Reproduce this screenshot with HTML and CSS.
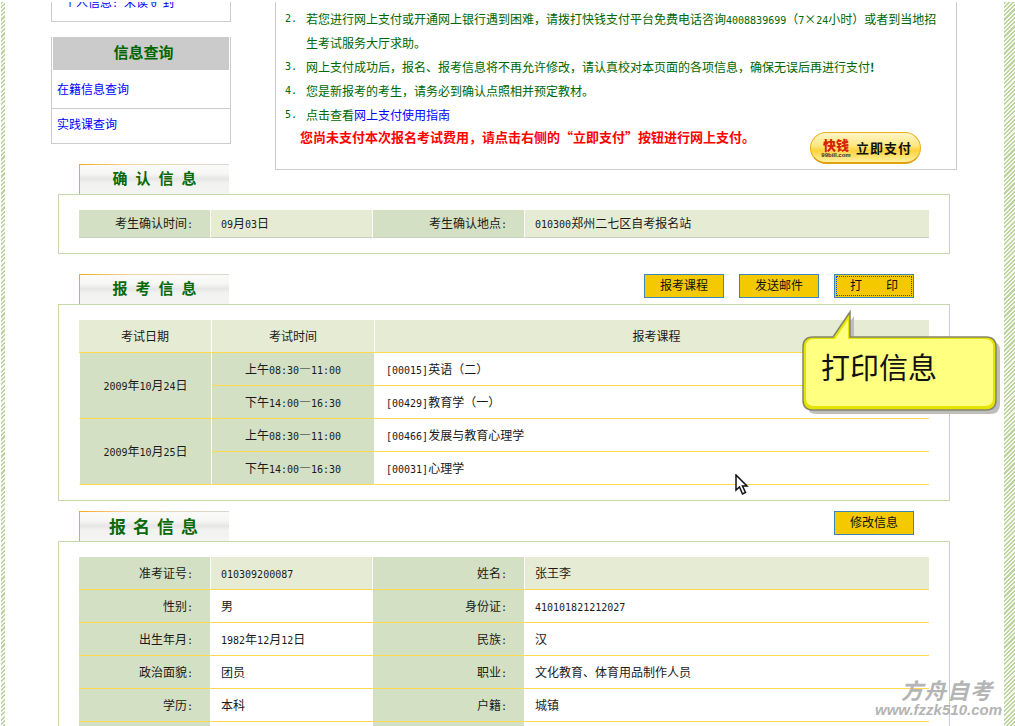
FILE: index.html
```html
<!DOCTYPE html>
<html lang="zh-CN">
<head>
<meta charset="utf-8">
<title>报考信息</title>
<link rel="stylesheet" href="styles.css">
</head>
<body>
<div class="page">
  <div class="stripe stripe-left"></div>
  <main class="main">
    <div class="top">
      <aside class="side">
        <div class="side-clip"><a class="clip-text" href="#">个人信息<span class="n">: </span>未读 <span class="n"> 0 </span> 封</a></div>
        <div class="side-box">
          <h3 class="side-head">信息查询</h3>
          <div class="side-row side-row-a"><a href="#">在籍信息查询</a></div>
          <div class="side-row side-row-b"><a href="#">实践课查询</a></div>
        </div>
      </aside>
      <section class="notice">
        <div class="note"><span class="note-no n">2.</span><p>若您进行网上支付或开通网上银行遇到困难，请拨打快钱支付平台免费电话咨询<span class="n">4008839699</span>（<span class="n">7</span>×<span class="n">24</span>小时）或者到当地招生考试服务大厅求助。</p></div>
        <div class="note"><span class="note-no n">3.</span><p>网上支付成功后，报名、报考信息将不再允许修改，请认真校对本页面的各项信息，确保无误后再进行支付<b>!</b></p></div>
        <div class="note"><span class="note-no n">4.</span><p>您是新报考的考生，请务必到确认点照相并预定教材。</p></div>
        <div class="note"><span class="note-no n">5.</span><p>点击查看<a href="#">网上支付使用指南</a></p></div>
        <div class="pay-row">
          <strong class="pay-warn">您尚未支付本次报名考试费用，请点击右侧的“立即支付”按钮进行网上支付。</strong>
          <a class="pay-btn" href="#">
            <span class="pay-logo"><span class="pay-kq">快钱</span><span class="pay-url">99bill.com</span></span>
            <span class="pay-text">立即支付</span>
          </a>
        </div>
      </section>
    </div>

    <section class="block">
      <div class="block-head"><h2 class="tab">确认信息</h2></div>
      <div class="panel">
        <table class="grid grid-confirm">
          <colgroup><col class="c1"><col class="c2"><col class="c3"><col class="c4"></colgroup>
          <tr>
            <td class="lab">考生确认时间<span class="n">:</span></td>
            <td class="val tint"><span class="n">09</span>月<span class="n">03</span>日</td>
            <td class="lab">考生确认地点<span class="n">:</span></td>
            <td class="val tint"><span class="n">010300</span>郑州二七区自考报名站</td>
          </tr>
        </table>
      </div>
    </section>

    <section class="block">
      <div class="block-head">
        <h2 class="tab">报考信息</h2>
        <div class="actions">
          <button class="btn" type="button">报考课程</button>
          <button class="btn" type="button">发送邮件</button>
          <button class="btn btn-focus" type="button">打　　印</button>
        </div>
      </div>
      <div class="panel">
        <table class="grid grid-exam">
          <colgroup><col class="e1"><col class="e2"><col class="e3"></colgroup>
          <tr class="hd"><td>考试日期</td><td>考试时间</td><td class="hd-course">报考课程</td></tr>
          <tr>
            <td class="date" rowspan="2"><span class="n">2009</span>年<span class="n">10</span>月<span class="n">24</span>日</td>
            <td class="time">上午<span class="n">08:30</span>—<span class="n">11:00</span></td>
            <td class="course"><span class="n">[00015]</span>英语（二）</td>
          </tr>
          <tr>
            <td class="time">下午<span class="n">14:00</span>—<span class="n">16:30</span></td>
            <td class="course"><span class="n">[00429]</span>教育学（一）</td>
          </tr>
          <tr>
            <td class="date" rowspan="2"><span class="n">2009</span>年<span class="n">10</span>月<span class="n">25</span>日</td>
            <td class="time">上午<span class="n">08:30</span>—<span class="n">11:00</span></td>
            <td class="course"><span class="n">[00466]</span>发展与教育心理学</td>
          </tr>
          <tr>
            <td class="time">下午<span class="n">14:00</span>—<span class="n">16:30</span></td>
            <td class="course"><span class="n">[00031]</span>心理学</td>
          </tr>
        </table>
      </div>
    </section>

    <section class="block block-last">
      <div class="block-head">
        <h2 class="tab tab-lg">报名信息</h2>
        <div class="actions"><button class="btn" type="button">修改信息</button></div>
      </div>
      <div class="panel">
        <table class="grid grid-info">
          <colgroup><col class="c1"><col class="c2"><col class="c3"><col class="c4"></colgroup>
          <tr>
            <td class="lab">准考证号<span class="n">:</span></td><td class="val tint"><span class="n">010309200087</span></td>
            <td class="lab">姓名<span class="n">:</span></td><td class="val tint">张王李</td>
          </tr>
          <tr>
            <td class="lab">性别<span class="n">:</span></td><td class="val">男</td>
            <td class="lab">身份证<span class="n">:</span></td><td class="val"><span class="n">410101821212027</span></td>
          </tr>
          <tr>
            <td class="lab">出生年月<span class="n">:</span></td><td class="val"><span class="n">1982</span>年<span class="n">12</span>月<span class="n">12</span>日</td>
            <td class="lab">民族<span class="n">:</span></td><td class="val">汉</td>
          </tr>
          <tr>
            <td class="lab">政治面貌<span class="n">:</span></td><td class="val">团员</td>
            <td class="lab">职业<span class="n">:</span></td><td class="val">文化教育、体育用品制作人员</td>
          </tr>
          <tr>
            <td class="lab">学历<span class="n">:</span></td><td class="val">本科</td>
            <td class="lab">户籍<span class="n">:</span></td><td class="val">城镇</td>
          </tr>
          <tr>
            <td class="lab">&nbsp;</td><td class="val">&nbsp;</td>
            <td class="lab">&nbsp;</td><td class="val">&nbsp;</td>
          </tr>
        </table>
      </div>
    </section>
  </main>
  <div class="stripe stripe-right"></div>

  <svg class="callout" width="204" height="112" viewBox="0 0 204 112" aria-label="打印信息">
    <path class="co-shadow" d="M13 29H33L50 4V29H186Q196 29 196 39V92Q196 102 186 102H13Q3 102 3 92V39Q3 29 13 29Z" transform="translate(4 4)"/>
    <path class="co-edge" d="M13 29H33L50 4V29H186Q196 29 196 39V92Q196 102 186 102H13Q3 102 3 92V39Q3 29 13 29Z"/>
    <path class="co-fill" d="M14 31H35L48 12V31H185Q193 31 193 39V90Q193 98 185 98H14Q6 98 6 90V39Q6 31 14 31Z"/>
    <text class="co-text" x="21" y="71">打印信息</text>
  </svg>

  <svg class="cursor" width="14" height="22" viewBox="0 0 14 22">
    <path class="cursor-arrow" d="M1 1V16L4.500 13L7.500 20L10.500 18.500L7.500 12H12Z"/>
  </svg>

  <div class="mark">
    <span class="mark-cn">方舟自考</span>
    <span class="mark-url">www.fzzk510.com</span>
  </div>
</div>
</body>
</html>
```

FILE: styles.css
```css
* { box-sizing: border-box; }
html, body { margin: 0; padding: 0; background: #fff; }
body {
  font-family: "Noto Sans CJK SC", "Liberation Sans", sans-serif;
  font-size: 12px;
  color: #1a1a1a;
}
a { color: #00f; text-decoration: none; }
.n { font-family: "DejaVu Sans Mono", monospace; font-size: 10px; line-height: 1; }

.page {
  position: relative;
  display: flex;
  width: 1015px;
  height: 726px;
  padding-top: 2px;
  overflow: hidden;
}
.stripe { background: repeating-linear-gradient(135deg, #bdd3a0 0 1.500px, #f4f8ee 1.500px 3px); }
.stripe-left { width: 4px; margin-left: 1px; flex: none; }
.stripe-right { width: 11px; flex: none; }
.main { flex: 1; min-width: 0; }

/* top */
.top { display: flex; align-items: flex-start; }
.side { width: 180px; margin-left: 46px; flex: none; }
.side-clip {
  height: 20px;
  border: 1px solid #ccc;
  border-width: 0 1px 1px;
  overflow: hidden;
  display: flex;
  align-items: flex-end;
  padding: 0 0 11px 12px;
}
.clip-text { line-height: 16px; flex: none; }
.side-box {
  margin-top: 15px;
  border: 1px solid #ccc;
  border-width: 0 1px 1px;
  padding: 0 1px;
}
.side-head {
  margin: 0;
  height: 33px;
  padding-left: 5px;
  background: #cbcbcb;
  color: #060;
  font-size: 15px;
  font-weight: 700;
  line-height: 30px;
  text-align: center;
}
.side-row { display: flex; align-items: center; margin: 0 -1px; }
.side-row-a { height: 39px; padding: 0 0 2px 5px; border-bottom: 1px solid #ccc; }
.side-row-b { height: 34px; padding: 0 0 5px 5px; }

.notice {
  width: 682px;
  height: 168px;
  margin: 0 0 -6px 44px;
  flex: none;
  padding-top: 5px;
  border: 1px solid #ccc;
  border-top: 0;
  color: #060;
}
.note { display: flex; line-height: 24px; padding-left: 9px; }
.note-no { width: 21px; flex: none; line-height: 24px; }
.note p { margin: 0; width: 632px; }
.pay-row { display: flex; align-items: flex-start; padding: 0 35px 0 24px; justify-content: space-between; }
.pay-warn { color: #f00; font-size: 13px; font-weight: 700; line-height: 20px; }
.pay-btn {
  display: flex;
  align-items: center;
  gap: 5px;
  width: 111px;
  height: 32px;
  margin-top: 5px;
  padding-left: 10px;
  border-radius: 16px;
  border: 1px solid #e8b21c;
  border-bottom: 2px solid #e0a010;
  background: linear-gradient(#fff6c8, #ffe680 45%, #ffd23a 60%, #fff0a0);
  color: #111;
}
.pay-logo { display: flex; flex-direction: column; align-items: center; width: 30px; }
.pay-kq {
  color: #d8220c;
  font-size: 13px;
  font-weight: 900;
  line-height: 15px;
  text-shadow: 1px 0 #ffe36a, -1px 0 #ffe36a, 0 1px #ffe36a;
}
.pay-url { font: 700 6px/7px "Liberation Sans", sans-serif; color: #333; }
.pay-text { font-size: 13px; font-weight: 700; letter-spacing: 1px; white-space: nowrap; }

/* blocks */
.block { margin: 0 0 20px 53px; width: 892px; }
.block:nth-child(3) { margin-bottom: 10px; }
.block-head { display: flex; justify-content: space-between; align-items: flex-start; height: 30px; padding: 0 36px 0 21px; }
.tab {
  margin: 0;
  width: 150px;
  height: 30px;
  padding-left: 8px;
  color: #0a6a0a;
  font-size: 15px;
  font-weight: 700;
  line-height: 26px;
  letter-spacing: 8px;
  text-align: center;
  border-top: 1px solid;
  border-image: linear-gradient(90deg, #f7a81e, #f0d8a0 35%, #d8d8d8) 1;
  border-left: 1px solid #f2d9a8;
  background: linear-gradient(#fbfbfa, #f6f6f4 30%, #e6e6e4 48%, #f2f2f0 62%, #f4f4f2);
}
.tab-lg { font-size: 17px; letter-spacing: 7px; padding-left: 5px; line-height: 28px; }
.actions { display: flex; gap: 15px; }
.btn {
  width: 80px;
  height: 24px;
  padding: 0 0 2px;
  border: 1px solid #3a86b6;
  background: #f4c900;
  color: #111;
  font: 12px/20px "Noto Sans CJK SC", sans-serif;
  cursor: pointer;
}
.btn-focus { outline: 1px dotted #1c3fd0; outline-offset: -3px; }
.panel { border: 1px solid #c6d7aa; padding: 15px 20px; }

/* tables */
.grid { width: 850px; border-collapse: separate; border-spacing: 0; table-layout: fixed; }
.grid td { padding: 0 0 2px; border-right: 1px solid #fff; }
.grid td:last-child { border-right: 0; }
.c1 { width: 132px; }
.c2 { width: 162px; }
.c3 { width: 152px; }
.c4 { width: 404px; }
.e1 { width: 133px; }
.e2 { width: 163px; }
.e3 { width: 554px; }
.lab { background: #d3e0c3; text-align: right; padding-right: 17px !important; }
.val { padding-left: 10px !important; }
.tint { background: #e6ecd3; }
.grid-confirm td { height: 28px; border-bottom: 1px solid #c9cfc0; }
.grid-info td { height: 33px; border-bottom: 1px solid #ffd850; }
.grid-exam td { height: 33px; border-bottom: 1px solid #ffd850; text-align: center; }
.grid-exam .hd td { background: #e6ecd3; }
.grid-exam .hd .hd-course { padding-left: 9px; }
.grid-exam .date { background: #d3e0c3; border-left: 1px solid #fff; }
.grid-exam .time { background: #d3e0c3; }
.grid-exam .course { text-align: left; padding-left: 11px; }

/* overlays */
.callout { position: absolute; left: 800px; top: 308px; }
.co-shadow { fill: #bdbdbd; }
.co-edge { fill: #e4e400; stroke: #85856a; stroke-width: 1.500; }
.co-fill { fill: #ffff80; }
.co-text { font-family: "Noto Sans CJK SC", sans-serif; font-size: 29px; fill: #111; }
.cursor { position: absolute; left: 735px; top: 474px; }
.cursor-arrow { fill: #fff; stroke: #111; stroke-width: 1.500; }
.mark { position: absolute; left: 860px; top: 676px; width: 142px; display: flex; flex-direction: column; align-items: flex-end; color: #b4b4b4; font-style: italic; font-weight: 700; }
.mark-cn { font-size: 22px; line-height: 26px; letter-spacing: 1px; margin-right: 9px; }
.mark-url { font: italic 700 15px/15px "Liberation Sans", sans-serif; }
```
